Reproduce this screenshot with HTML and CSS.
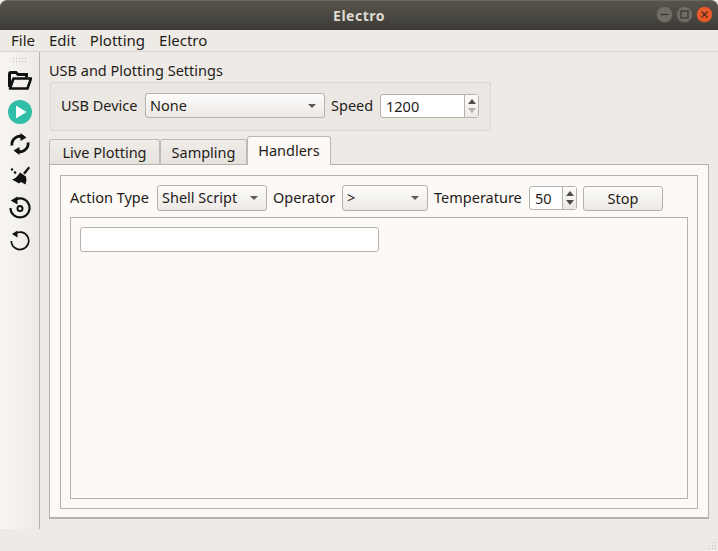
FILE: index.html
```html
<!DOCTYPE html>
<html lang="en">
<head>
    <meta charset="UTF-8">
    <title>Electro</title>
    <link rel="stylesheet" href="styles.css">
</head>
<body>
    <header class="titlebar">
        <span class="title">Electro</span>
        <div class="wincontrols">
            <svg class="winbtn" width="17" height="17" viewBox="0 0 17 17">
                <circle cx="8.5" cy="8.5" r="8" fill="#6f6d66" stroke="#4a4842" stroke-width="0.6"/>
                <path d="M4.5 8.5h8" stroke="#35342f" stroke-width="1.2"/>
            </svg>
            <svg class="winbtn" width="17" height="17" viewBox="0 0 17 17">
                <circle cx="8.5" cy="8.5" r="8" fill="#6f6d66" stroke="#4a4842" stroke-width="0.6"/>
                <rect x="5" y="5" width="7" height="7" fill="none" stroke="#35342f" stroke-width="1.2"/>
            </svg>
            <svg class="winbtn" width="17" height="17" viewBox="0 0 17 17">
                <circle cx="8.5" cy="8.5" r="8" fill="#e9592a" stroke="#4a4842" stroke-width="0.6"/>
                <path d="M5.5 5.5l6 6M11.5 5.5l-6 6" stroke="#4a2a1a" stroke-width="1.2"/>
            </svg>
        </div>
    </header>

    <nav class="menubar">
        <span class="menuitem">File</span>
        <span class="menuitem">Edit</span>
        <span class="menuitem">Plotting</span>
        <span class="menuitem">Electro</span>
    </nav>

    <div class="body">
        <aside class="toolbar">
            <div class="grip"></div>
            <!-- open -->
            <svg class="tool tool-open" width="24" height="19" viewBox="0 0 24 19">
                <path d="M1.500 16V3Q1.500 1.500 3 1.500H8L10 3.500H18.500V6.500" fill="none" stroke="#111" stroke-width="3"/>
                <path d="M2 17.500L5.500 7.500H23L19.500 17.500Z" fill="none" stroke="#111" stroke-width="2.600" stroke-linejoin="round"/>
            </svg>
            <!-- run -->
            <svg class="tool tool-run" width="24" height="24" viewBox="0 0 24 24">
                <circle cx="12" cy="12" r="12" fill="#2fbfa6"/>
                <path d="M8 5.500L18.500 12L8 18.500Z" fill="#fff"/>
            </svg>
            <!-- refresh -->
            <svg class="tool tool-refresh" width="22" height="24" viewBox="0 0 22 24">
                <path d="M3 13.500A8 8 0 0 1 14.500 5.200" fill="none" stroke="#111" stroke-width="2.800"/>
                <path d="M19 10.500A8 8 0 0 1 7.500 18.800" fill="none" stroke="#111" stroke-width="2.800"/>
                <path d="M11.500 1L17.500 5.500L11.500 9Z" fill="#111"/>
                <path d="M10.500 23L4.500 18.500L10.500 15Z" fill="#111"/>
            </svg>
            <!-- clear -->
            <svg class="tool tool-clear" width="22" height="20" viewBox="0 0 22 20">
                <path d="M19.500 0.500L21 2L16 8.500L14 7Z" fill="#111"/>
                <path d="M11 6.500L17 10.500L17.500 14L16.500 18.500L12 16L10 17.500L3 13.500Q7.500 12.500 11 6.500Z" fill="#111"/>
                <circle cx="3" cy="3.500" r="1.200" fill="#111"/>
                <circle cx="6" cy="6.500" r="1.300" fill="#111"/>
            </svg>
            <!-- replay -->
            <svg class="tool tool-replay" width="22" height="24" viewBox="0 0 22 24">
                <path d="M4 6.500A9.500 9.500 0 1 1 1.500 13" fill="none" stroke="#111" stroke-width="2.200"/>
                <path d="M8.500 1.500V9.500L1.800 5.500Z" fill="#111"/>
                <circle cx="11" cy="13.500" r="2.500" fill="none" stroke="#111" stroke-width="2"/>
            </svg>
            <!-- reset -->
            <svg class="tool" width="20" height="22" viewBox="0 0 20 22">
                <path d="M4 5.500A8.700 8.700 0 1 1 1.300 12" fill="none" stroke="#111" stroke-width="1.700"/>
                <path d="M7.500 1.500V8.500L2 5Z" fill="#111"/>
            </svg>
        </aside>

        <main class="content">
            <div class="section-title">USB and Plotting Settings</div>
            <div class="usb-box">
                <span class="label label-usb">USB Device</span>
                <div class="combo combo-usb"><span>None</span><i class="arrow"></i></div>
                <span class="label label-speed">Speed</span>
                <div class="spin spin-speed">
                    <span class="spin-value">1200</span>
                    <div class="spin-btns"><i class="up"></i><i class="down off"></i></div>
                </div>
            </div>

            <div class="tabs">
                <div class="tab tab-live">Live Plotting</div>
                <div class="tab tab-sampling">Sampling</div>
                <div class="tab tab-handlers active">Handlers</div>
            </div>
            <div class="pane">
                <div class="handlers">
                    <div class="handler-row">
                        <span class="label label-action">Action Type</span>
                        <div class="combo combo-action"><span>Shell Script</span><i class="arrow"></i></div>
                        <span class="label label-operator">Operator</span>
                        <div class="combo combo-op"><span>&gt;</span><i class="arrow"></i></div>
                        <span class="label label-temp">Temperature</span>
                        <div class="spin spin-temp">
                            <span class="spin-value">50</span>
                            <div class="spin-btns"><i class="up"></i><i class="down"></i></div>
                        </div>
                        <div class="button">Stop</div>
                    </div>
                    <div class="handler-frame">
                        <input class="text-input" type="text">
                    </div>
                </div>
            </div>
        </main>
    </div>

    <footer class="statusbar"><div class="sizegrip"></div></footer>
</body>
</html>
```

FILE: styles.css
```css
* {
    box-sizing: border-box;
}
html, body {
    height: 100%;
}
body {
    margin: 0;
    display: flex;
    flex-direction: column;
    background-color: #eeebe7;
    color: #1f1c18;
    font-family: "Noto Sans", "Open Sans", sans-serif;
    font-size: 14.5px;
    overflow: hidden;
}

/* window title */
.titlebar {
    height: 30px;
    flex: none;
    display: flex;
    align-items: center;
    justify-content: center;
    background: linear-gradient(#57544c, #3c3b37);
    border-top: 1px solid #6a675f;
    border-radius: 7px 7px 0 0;
    position: relative;
}
.title {
    color: #dfdbd2;
    font-weight: bold;
    font-size: 14px;
    letter-spacing: 0.5px;
}
.wincontrols {
    position: absolute;
    right: 5px;
    top: 5px;
    display: flex;
    gap: 3px;
}

/* menu */
.menubar {
    height: 22px;
    flex: none;
    display: flex;
    gap: 14px;
    padding: 0 0 2px 11px;
    align-items: center;
    border-bottom: 1px solid #d8d4ce;
    font-size: 15px;
}

.body {
    flex: 1;
    display: flex;
    min-height: 0;
}

/* left toolbar */
.toolbar {
    width: 40px;
    flex: none;
    display: flex;
    flex-direction: column;
    align-items: center;
    background: linear-gradient(to right, #f8f6f2, #eeebe7);
    border-right: 1px solid #b5b1ab;
    padding-top: 5px;
}
.grip {
    width: 16px;
    height: 5px;
    margin-bottom: 9px;
    background-image: radial-gradient(#bdb9b3 0.7px, transparent 0.8px);
    background-size: 3px 3px;
}
.tool {
    display: block;
    flex: none;
}
.tool-open { margin-bottom: 10px; }
.tool-run { margin-bottom: 8px; }
.tool-refresh { margin-bottom: 10px; }
.tool-clear { margin-bottom: 9px; }
.tool-replay { margin-bottom: 10px; }

/* main area */
.content {
    flex: 1;
    min-width: 0;
    padding: 10px 9px;
    display: flex;
    flex-direction: column;
}
.section-title {
    height: 20px;
    line-height: 16px;
    flex: none;
}
.usb-box {
    width: 441px;
    height: 49px;
    flex: none;
    margin-left: 1px;
    display: flex;
    align-items: center;
    padding: 0 0 2px 10px;
    background: #ebe8e4;
    border: 1px solid #dbd7d1;
    border-radius: 2px;
}
.label {
    flex: none;
    white-space: nowrap;
    padding-bottom: 2px;
}
.label-usb { width: 84px; }
.label-speed { width: 49px; margin-left: 6px; }
.label-action { width: 87px; }
.label-operator { width: 69px; margin-left: 6px; }
.label-temp { width: 95px; margin-left: 6px; }

/* combos and spin boxes */
.combo {
    height: 25px;
    display: flex;
    align-items: center;
    justify-content: space-between;
    padding: 0 8px 2px 4px;
    background: linear-gradient(#fdfcfb, #ece9e5);
    border: 1px solid #b5b1ab;
    border-radius: 3px;
    flex: none;
}
.arrow {
    width: 0;
    height: 0;
    margin-top: 2px;
    border-left: 4px solid transparent;
    border-right: 4px solid transparent;
    border-top: 4px solid #5c5953;
}
.combo-usb { width: 180px; }
.combo-action { width: 110px; }
.combo-op { width: 86px; }
.handler-row .combo { height: 26px; }

.spin {
    height: 24px;
    display: flex;
    background: #fff;
    border: 1px solid #b5b1ab;
    border-radius: 3px;
    flex: none;
    align-items: stretch;
}
.spin-value {
    flex: 1;
    padding-left: 5px;
    line-height: 23px;
}
.spin-btns {
    width: 14px;
    display: flex;
    flex-direction: column;
    align-items: center;
    justify-content: center;
    gap: 4px;
    border-left: 1px solid #b5b1ab;
    background: linear-gradient(#fdfcfb, #ece9e5);
}
.spin-btns i {
    width: 0;
    height: 0;
    border-left: 4px solid transparent;
    border-right: 4px solid transparent;
}
.spin-btns .up { border-bottom: 5px solid #4f4c47; }
.spin-btns .down { border-top: 5px solid #4f4c47; }
.spin-btns .down.off { border-top-color: #b5b1ab; }
.spin-speed { width: 99px; }
.spin-temp { width: 48px; }

/* tabs */
.tabs {
    display: flex;
    flex: none;
    align-items: flex-end;
    height: 28px;
    margin-top: 5px;
    position: relative;
    z-index: 1;
}
.tab {
    height: 25px;
    line-height: 25px;
    text-align: center;
    background: linear-gradient(#f0edea, #e6e3de);
    border: 1px solid #bdb9b3;
    border-bottom: none;
    border-radius: 3px 3px 0 0;
}
.tab-live { width: 111px; }
.tab-sampling { width: 87px; margin-left: 0; }
.tab-handlers { width: 84px; }
.tab.active {
    line-height: 27px;
    background: #fdf9f6;
    margin-bottom: -1px;
    height: 29px;
}
.pane {
    height: 355px;
    width: 660px;
    flex: none;
    padding: 10px 10px 8px;
    background: #fdf9f6;
    border: 1px solid #b5b1ab;
    border-bottom-width: 2px;
}
.handlers {
    height: 100%;
    border: 1px solid #b5b1ab;
    padding: 9px;
    display: flex;
    flex-direction: column;
}
.handler-row {
    height: 26px;
    flex: none;
    display: flex;
    align-items: center;
    margin-bottom: 6px;
}
.spin-temp { margin-right: 6px; }
.button {
    width: 80px;
    height: 25px;
    line-height: 23px;
    text-align: center;
    background: linear-gradient(#fdfcfb, #ece9e5);
    border: 1px solid #b5b1ab;
    border-radius: 3px;
}
.handler-frame {
    flex: 1;
    border: 1px solid #b5b1ab;
    padding: 9px;
}
.text-input {
    display: block;
    width: 299px;
    height: 25px;
    background: #fff;
    border: 1px solid #b5b1ab;
    border-radius: 3px;
    outline: none;
}

/* bottom */
.statusbar {
    height: 22px;
    flex: none;
    display: flex;
    justify-content: flex-end;
    align-items: flex-end;
}
.sizegrip {
    width: 12px;
    height: 12px;
    margin: 0 1px 1px 0;
    background-image: radial-gradient(#bdb9b3 0.7px, transparent 0.9px);
    background-size: 3px 3px;
    clip-path: polygon(100% 0, 100% 100%, 0 100%);
}
```
